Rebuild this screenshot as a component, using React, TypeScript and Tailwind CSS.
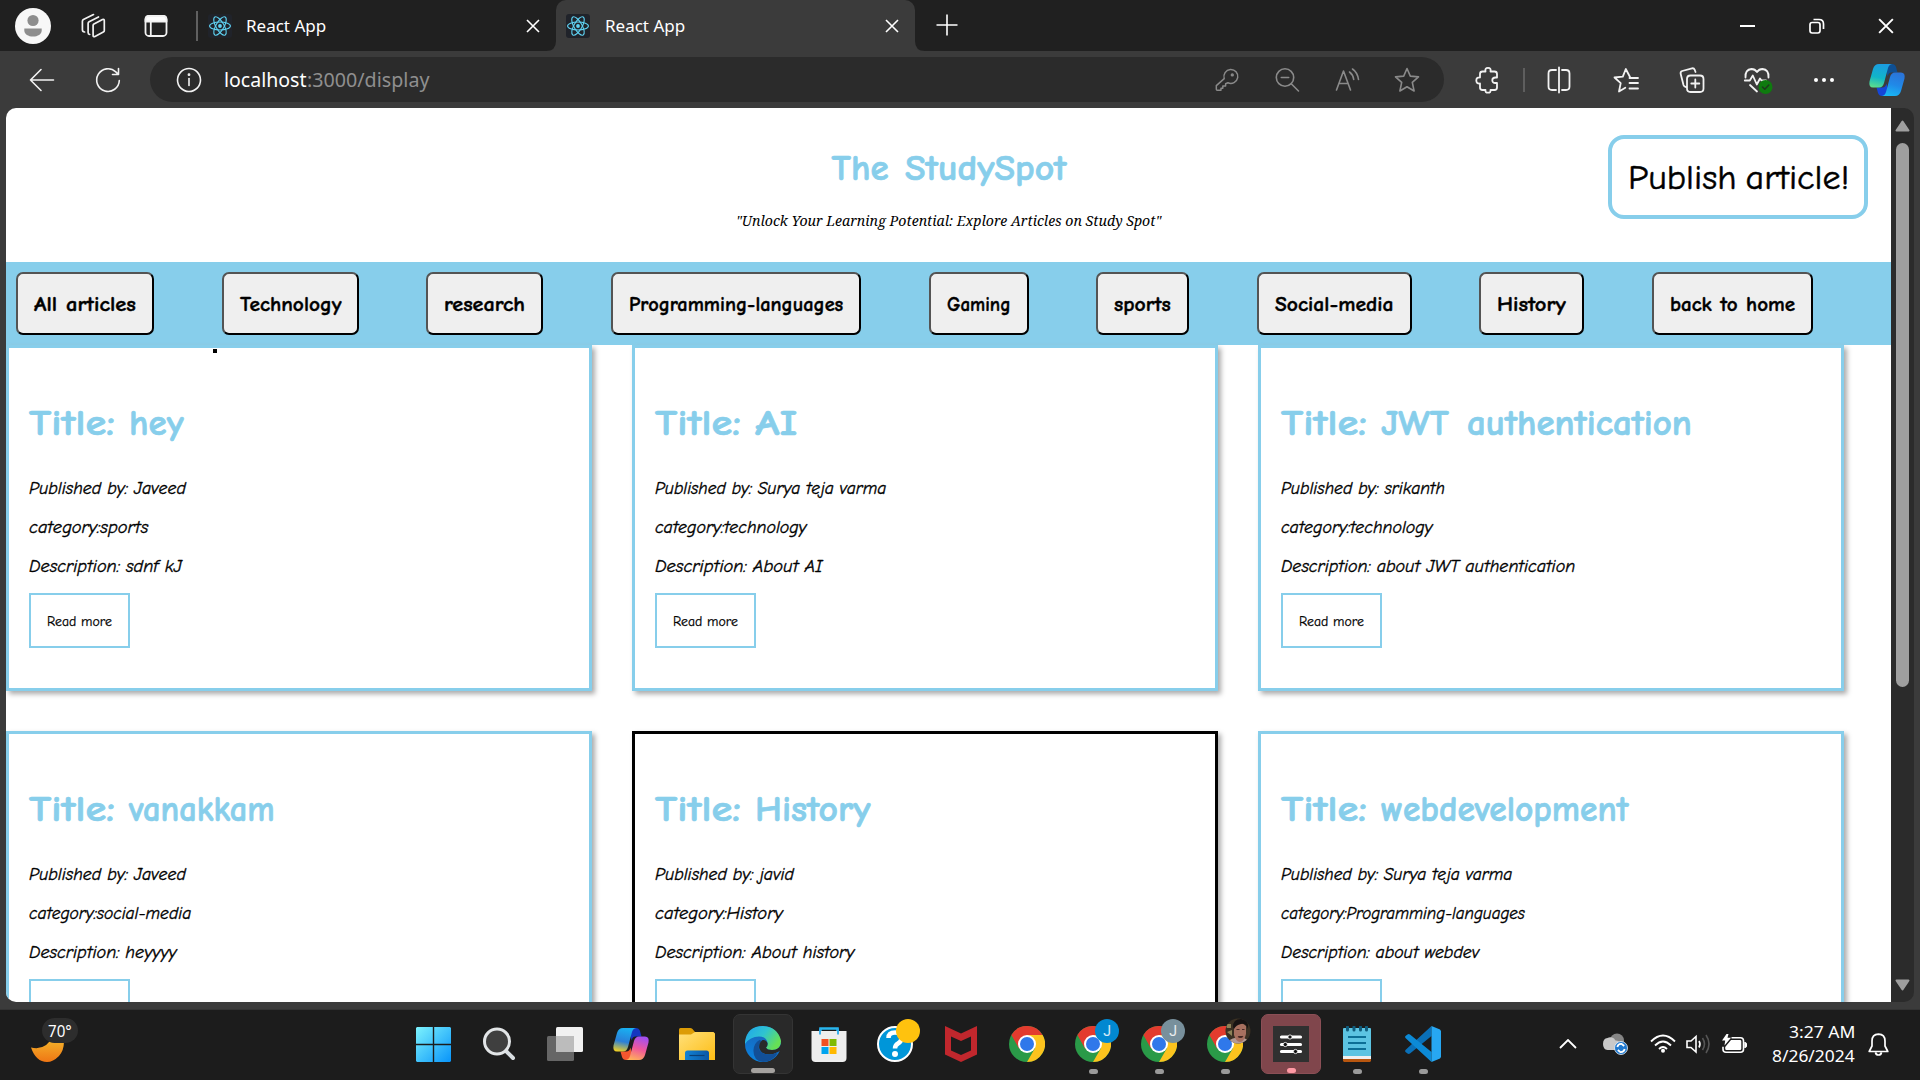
import React, { useLayoutEffect, useRef, useState } from "react";

/* Single line of text stretched horizontally to a given width. */
function Fit({ w, children, className = "" }: { w: number; children: string; className?: string }) {
  const ref = useRef<HTMLSpanElement>(null);
  const [scale, setScale] = useState(1);
  useLayoutEffect(() => {
    if (ref.current) setScale(w / ref.current.offsetWidth);
  }, [w]);
  return (
    <span className={"block shrink-0 text-left whitespace-nowrap " + className} style={{ width: w }}>
      <span ref={ref} className="inline-block origin-left" style={{ transform: `scaleX(${scale})` }}>
        {children}
      </span>
    </span>
  );
}

const comic = "font-['Comic_Sans_MS','Comic_Neue','Open_Sans',sans-serif]";

function Slot({ w, children }: { w: number; children?: React.ReactNode }) {
  return (
    <div className="flex h-full shrink-0 items-center justify-center" style={{ width: w }}>
      {children}
    </div>
  );
}

function Stroke({ size = 28, color = "#f2f2f2", sw = 1.6, children }: { size?: number; color?: string; sw?: number; children: React.ReactNode }) {
  return (
    <svg width={size} height={size} viewBox="0 0 28 28" fill="none" stroke={color} strokeWidth={sw} strokeLinecap="round" strokeLinejoin="round" className="shrink-0">
      {children}
    </svg>
  );
}

function ReactLogo() {
  return (
    <svg width="24" height="24" viewBox="0 0 24 24" fill="none" stroke="#5fd3f3" strokeWidth="1.1" className="shrink-0 rounded-[3px] bg-[#20232a]">
      <ellipse cx="12" cy="12" rx="10.4" ry="4" />
      <ellipse cx="12" cy="12" rx="10.4" ry="4" transform="rotate(60 12 12)" />
      <ellipse cx="12" cy="12" rx="10.4" ry="4" transform="rotate(120 12 12)" />
      <circle cx="12" cy="12" r="1.9" fill="#5fd3f3" stroke="none" />
    </svg>
  );
}

function Cross({ size = 14, sw = 1.6 }: { size?: number; sw?: number }) {
  return (
    <svg width={size} height={size} viewBox="0 0 14 14" stroke="#fff" strokeWidth={sw} className="shrink-0">
      <path d="M1 1L13 13M13 1L1 13" />
    </svg>
  );
}

function TabBar() {
  return (
    <div className="flex h-[51px] shrink-0 items-center bg-[#202020] font-['Noto_Sans',sans-serif] text-[17px] text-white">
      <div className="flex w-[556px] items-center pl-[15px]">
        <svg width="36" height="36" viewBox="0 0 36 36">
          <circle cx="18" cy="18" r="18" fill="#f7f7f7" />
          <circle cx="18" cy="12.5" r="5.6" fill="#8d8d8d" />
          <path d="M9.3 20.5h17.4v1.7c0 4-4 6.3-8.700 6.300s-8.700-2.300-8.700-6.300z" fill="#8d8d8d" />
        </svg>
        <div className="ml-[28px]">
          <Stroke sw={1.7}>
            <path d="M14.500 12.300L23.500 7.500q1.800-.6 1.800 1.200V18.500q0 1.100-1 1.600L16 24.500q-1.900.7-1.900-1.100V13.200z" />
            <path d="M10.700 22.500q-1.600-.2-1.600-2V11.500q0-1.200 1-1.800L19.500 5" />
            <path d="M5.600 20q-2.200 0-2.200-2.200V9.200q0-1.200 1-1.800L14.500 2.600" />
          </Stroke>
        </div>
        <div className="ml-[35px]">
          <Stroke sw={1.8}>
            <rect x="3.500" y="4" width="21" height="20" rx="3.500" />
            <path d="M3.500 7.500q0-3.500 3.500-3.500h14q3.500 0 3.500 3.500V9.500h-21z" fill="#fff" />
            <path d="M8.800 9v15" />
          </Stroke>
        </div>
        <div className="ml-[26px] h-[30px] w-[2px] bg-[#606060]" />
        <div className="ml-[10px]"><ReactLogo /></div>
        <Fit w={80} className="ml-[14px]">React App</Fit>
        <div className="ml-[200px]"><Cross /></div>
      </div>
      <div className="relative flex h-full w-[359px] items-center rounded-t-[10px] bg-[#3b3b3b] pl-[10px]">
        <svg width="10" height="10" viewBox="0 0 10 10" className="absolute bottom-0 -left-[10px]"><path d="M10 0V10H0Q10 10 10 0Z" fill="#3b3b3b" /></svg>
        <svg width="10" height="10" viewBox="0 0 10 10" className="absolute -right-[10px] bottom-0"><path d="M0 0V10H10Q0 10 0 0Z" fill="#3b3b3b" /></svg>
        <ReactLogo />
        <Fit w={80} className="ml-[15px]">React App</Fit>
        <div className="ml-[200px]"><Cross /></div>
      </div>
      <svg width="22" height="22" viewBox="0 0 22 22" stroke="#fff" strokeWidth="1.600" className="ml-[21px] -mt-[2px]"><path d="M11 .5v21M.5 11h21" /></svg>
      <div className="ml-auto flex h-full items-center">
        <Slot w={69}><div className="h-[2px] w-[15px] bg-white" /></Slot>
        <Slot w={69}>
          <svg width="16" height="16" viewBox="0 0 16 16" fill="none" stroke="#fff" strokeWidth="1.700">
            <rect x="1" y="4.500" width="10" height="10.500" rx="2.200" />
            <path d="M4.500 1.500h5.500q4.500 0 4.500 4.500v5" />
          </svg>
        </Slot>
        <Slot w={69}><Cross size={16} sw={1.7} /></Slot>
      </div>
    </div>
  );
}

function Copilot({ colors, size = 38 }: { colors: string[]; size?: number }) {
  const id = "cp" + colors[0].slice(1);
  return (
    <svg width={size} height={size} viewBox="0 0 38 38" className="shrink-0">
      <defs>
        <linearGradient id={id + "a"} x1="0.400" y1="0" x2="0.200" y2="1"><stop offset="0" stopColor={colors[0]} /><stop offset=".55" stopColor={colors[1]} /><stop offset="1" stopColor={colors[2]} /></linearGradient>
        <linearGradient id={id + "b"} x1="0.600" y1="0" x2="0.300" y2="1"><stop offset="0" stopColor={colors[3]} /><stop offset=".5" stopColor={colors[4]} /><stop offset="1" stopColor={colors[5]} /></linearGradient>
      </defs>
      <path d="M17 3h7q3 0 4 3l1.500 5.500h-6q-3 0-4 4z" fill={colors[6]} />
      <path d="M21 35h-7q-3 0-4-3l-1.500-5.500h6q3 0 4-4z" fill={colors[7]} />
      <path d="M11 3H24q-3 .5-4 4L16 22q-1.300 4.500-5 4.500H5q-4.500 0-3.500-6L5 8q1.500-5 6-5z" fill={`url(#${id}a)`} />
      <path d="M27 35H14q3-.5 4-4L22 16q1.300-4.500 5-4.500h6q4.500 0 3.500 6L33 30q-1.500 5-6 5z" fill={`url(#${id}b)`} />
    </svg>
  );
}

function Toolbar() {
  const g = "#8a8a8a";
  return (
    <div className="flex h-[57px] shrink-0 items-center bg-[#3b3b3b]">
      <div className="flex w-[150px] items-center pl-[28px]">
        <Stroke><path d="M25.500 14H2.500M13 3.500L2.500 14L13 24.500" /></Stroke>
        <div className="ml-[38px]">
          <Stroke><path d="M25.300 14.500A11.300 11.300 0 1 1 21.800 5.900L24.300 8.300M24.500 2.500v6h-6" /></Stroke>
        </div>
      </div>
      <div className="flex h-[45px] w-[1294px] shrink-0 items-center rounded-full bg-[#2b2b2b] pl-[25px] font-['Noto_Sans',sans-serif] text-[20px]">
        <Stroke><circle cx="14" cy="14" r="11.500" /><path d="M14 12.500v7" /><circle cx="14" cy="8.700" r=".6" fill="#fff" /></Stroke>
        <Fit w={83} className="ml-[21px] text-white">localhost</Fit>
        <Fit w={122} className="text-[#8f8f8f]">:3000/display</Fit>
        <div className="ml-auto flex items-center pr-[7px]">
          <Slot w={60}>
            <Stroke color={g} size={26}><path d="M3.500 25q-1 0-1-1v-4L11 12.500a7.500 7.500 0 1 1 4 4.500l-2.500 1v2.500h-3V23H7.500v2z" /><circle cx="19.700" cy="8.500" r="1" /></Stroke>
          </Slot>
          <Slot w={60}>
            <Stroke color={g}><circle cx="12" cy="11.500" r="8.700" /><path d="M8.300 11.500h7.400M18.500 18L25.500 25" /></Stroke>
          </Slot>
          <Slot w={60}>
            <Stroke color={g}><path d="M3.500 24L10.500 5L17.500 24M6 17.500h9M16.500 6q3.500 2.500 4.200 7.500M19.500 3q5 3.500 6 10.500" /></Stroke>
          </Slot>
          <Slot w={60}>
            <Stroke color={g}><path d="M14 2.500l3.300 7.600 8.200.8-6.200 5.500 1.800 8.600L14 20.700 6.900 25l1.800-8.600-6.200-5.500 8.200-.8z" /></Stroke>
          </Slot>
        </div>
      </div>
      <div className="flex h-full items-center pl-[14px]">
        <Slot w={60}>
          <Stroke sw={1.8}><path d="M8.500 5.500h3q-.8-3.700 2.500-3.700T16.500 5.500h4q2.500 0 2.500 2.500v3.500h-1.500q-3.200 0-3.200 2.800t3.200 2.700H23V21.500q0 2.500-2.500 2.500h-4q.5 2.700-2.500 2.700T11.500 24h-3Q6 24 6 21.500V17.500q-3.700.4-3.700-3T6 11.500V8q0-2.500 2.500-2.500z" /></Stroke>
        </Slot>
        <div className="ml-[5px] h-[24px] w-[2px] bg-[#5e5e5e]" />
        <Slot w={68}>
          <Stroke sw={1.8}><path d="M11 4H7Q3.500 4 3.500 7.500v13Q3.500 24 7 24h4M17 4h4q3.500 0 3.500 3.500v13q0 3.500-3.500 3.500h-4M14 1.500v25" /></Stroke>
        </Slot>
        <Slot w={66}>
          <Stroke sw={1.8}><path d="M18 11L13.800 3l-3 7.600-8.300.9 6.200 5.600L7 25.500l6.300-3.800M17.500 12H26M17.500 17H26M17.500 22.500H26" /></Stroke>
        </Slot>
        <Slot w={66}>
          <Stroke sw={1.8}><path d="M8 21q-2-.4-2.500-2L2.700 8q-.6-2.300 1.500-3L14 2.300q2-.4 2.700 1.500L17.500 6M15.500 9.500h-3Q9 9.500 9 13v9.500q0 3.500 3.500 3.500H22q3.500 0 3.500-3.500V13q0-3.500-3.500-3.500h-6.500M17.300 13.500v8M13.300 17.500h8" /></Stroke>
        </Slot>
        <Slot w={66}>
          <svg width="30" height="28" viewBox="0 0 30 28" fill="none" stroke="#f2f2f2" strokeWidth="1.800" strokeLinejoin="round" strokeLinecap="round">
            <path d="M2.500 11.500Q2 3.500 8.500 3q3.500 0 5.500 3 2-3 5.500-3 6.500.5 6 8.500M1.800 14.500h5l3-5 4 9 3.200-6 1.500 2H23M7 19l7 6.500" />
            <circle cx="22.500" cy="21" r="7" fill="#0f7b0f" stroke="none" />
            <path d="M19.500 21l2.300 2.300 4-4.300" stroke="#1d3a1d" strokeWidth="1.500" />
          </svg>
        </Slot>
        <Slot w={66}>
          <svg width="22" height="6" viewBox="0 0 22 6" fill="#fff"><circle cx="3" cy="3" r="2" /><circle cx="11" cy="3" r="2" /><circle cx="19" cy="3" r="2" /></svg>
        </Slot>
        <Slot w={60}>
          <Copilot colors={["#1b9de0", "#10b5c8", "#5ee08a", "#2b74d8", "#2089e8", "#19b9f5", "#0f4f92", "#1546d8"]} />
        </Slot>
      </div>
    </div>
  );
}

const NAV: [string, number][] = [
  ["All articles", 138], ["Technology", 137], ["research", 117], ["Programming-languages", 250], ["Gaming", 100],
  ["sports", 93], ["Social-media", 155], ["History", 105], ["back to home", 161],
];

type Article = { title: string; tw: number; by: string; bw: number; cat: string; cw: number; desc: string; dw: number; dark?: boolean };
const ARTICLES: Article[] = [
  { title: "hey", tw: 55, by: "Published by: Javeed", bw: 157, cat: "category:sports", cw: 119, desc: "Description: sdnf kJ", dw: 153 },
  { title: "AI", tw: 42, by: "Published by: Surya teja varma", bw: 231, cat: "category:technology", cw: 152, desc: "Description: About AI", dw: 168 },
  { title: "JWT authentication", tw: 311, by: "Published by: srikanth", bw: 164, cat: "category:technology", cw: 152, desc: "Description: about JWT authentication", dw: 294 },
  { title: "vanakkam", tw: 146, by: "Published by: Javeed", bw: 157, cat: "category:social-media", cw: 162, desc: "Description: heyyyy", dw: 148 },
  { title: "History", tw: 115, by: "Published by: javid", bw: 139, cat: "category:History", cw: 128, desc: "Description: About history", dw: 199, dark: true },
  { title: "webdevelopment", tw: 247, by: "Published by: Surya teja varma", bw: 231, cat: "category:Programming-languages", cw: 244, desc: "Description: about webdev", dw: 198 },
];

function Card({ a }: { a: Article }) {
  return (
    <article className={"h-[346px] border-[3px] pt-[50px] pl-[20px] shadow-[3px_3px_5px_#aaa] " + (a.dark ? "border-black" : "border-[#87ceeb]")}>
      <h2 className="flex h-[50px] gap-[14px] text-[37px] leading-[50px] font-bold text-[#87ceeb] [-webkit-text-stroke:0.7px] [word-spacing:5px]">
        <Fit w={86}>Title:</Fit>
        <Fit w={a.tw}>{a.title}</Fit>
      </h2>
      <div className="mt-[21px] text-[17.500px] leading-[39px] italic [-webkit-text-stroke:0.35px]">
        <Fit w={a.bw}>{a.by}</Fit>
        <Fit w={a.cw}>{a.cat}</Fit>
        <Fit w={a.dw}>{a.desc}</Fit>
      </div>
      <button className="mt-[7px] flex h-[55px] w-[101px] items-center justify-center border-2 border-[#87ceeb] pt-[2px] text-[14px] [-webkit-text-stroke:0.25px]">
        <Fit w={65}>Read more</Fit>
      </button>
    </article>
  );
}

function Page() {
  return (
    <main className={"h-[894px] w-[1885px] overflow-hidden rounded-tl-[10px] rounded-bl-[10px] bg-white text-black " + comic}>
      <header className="grid h-[154px] grid-cols-[1fr_425px_1fr]">
        <div />
        <div className="flex flex-col items-center pt-[35px]">
          <h1 className="flex h-[50px] gap-[16px] text-[37px] leading-[50px] font-bold text-[#87ceeb] [-webkit-text-stroke:0.7px]">
            <Fit w={57}>The</Fit>
            <Fit w={161}>StudySpot</Fit>
          </h1>
          <Fit w={425} className="mt-[17px] font-['Noto_Serif','Liberation_Serif',serif] text-[14.500px] leading-[20px] italic">"Unlock Your Learning Potential: Explore Articles on Study Spot"</Fit>
        </div>
        <div className="flex justify-end pt-[27px] pr-[23px]">
          <button className="flex h-[84px] w-[260px] items-center justify-center rounded-[16px] border-4 border-[#87ceeb] pt-[3px] text-[35px] [-webkit-text-stroke:0.5px] [word-spacing:-3px]">
            <Fit w={221}>Publish article!</Fit>
          </button>
        </div>
      </header>
      <nav className="flex h-[83px] gap-[67.650px] bg-[#87ceeb] pt-[10px] pl-[10px]">
        {NAV.map(([label, w]) => (
          <button key={label} className="flex h-[63px] shrink-0 items-center justify-center rounded-[7px] border-2 border-t-[#545454] border-r-black border-b-black border-l-[#545454] bg-[#efefef] pt-[3px] text-[20.500px] font-bold [-webkit-text-stroke:0.4px] [word-spacing:1px]" style={{ width: w }}>
            <Fit w={w - 36}>{label}</Fit>
          </button>
        ))}
      </nav>
      <section className="relative grid grid-cols-[586px_586px_586px] gap-[40px]">
        {ARTICLES.map((a) => <Card key={a.title} a={a} />)}
        <span className="absolute top-[4px] left-[207px] size-[4px] bg-black" />
      </section>
    </main>
  );
}

function Chrome({ badge, color }: { badge?: "J" | "photo"; color?: string }) {
  return (
    <div className="relative">
      <svg width="36" height="36" viewBox="0 0 36 36">
        <circle cx="18" cy="18" r="18" fill="#2a9a48" />
        <path d="M2.400 9A18 18 0 0 1 33.600 9L18 9.500L10 22.500z" fill="#e33b2e" />
        <path d="M33.600 9A18 18 0 0 1 18 36L25.800 22.500L18 9z" fill="#fcc31e" />
        <circle cx="18" cy="18" r="9" fill="#fff" />
        <circle cx="18" cy="18" r="7" fill="#2f78ea" />
      </svg>
      {badge === "J" && (
        <span className="absolute -top-[7px] left-[20px] flex size-[24px] items-center justify-center rounded-full font-['Roboto',sans-serif] text-[14px] text-white/85" style={{ background: color }}>J</span>
      )}
      {badge === "photo" && (
        <svg width="26" height="26" viewBox="0 0 26 26" className="absolute -top-[8px] left-[18px]">
          <defs><clipPath id="face"><circle cx="13" cy="13" r="12.500" /></clipPath></defs>
          <g clipPath="url(#face)">
            <rect width="26" height="26" fill="#3a3023" />
            <path d="M0 6h6v4H2zM2 14l5-2v6z" fill="#8d8258" />
            <path d="M3 26q2-6 7-6h9l7 4v2z" fill="#b39a96" />
            <path d="M9 8q6-6 12 0v8q-2 8-6 8t-6-7z" fill="#a8705f" />
            <path d="M8 9q0-8 8-8t7 10q-2-6-7-5t-7 5z" fill="#171313" />
            <path d="M11.500 11.500h3M17 11.500h2.500M13 18.500q2.500 2 5-.3" stroke="#4b2a26" strokeWidth="1.200" />
          </g>
        </svg>
      )}
    </div>
  );
}

function TaskIcon({ children, state }: { children: React.ReactNode; state?: "run" | "active" | "alert" }) {
  const bg = state === "active" ? "bg-[#292929] border border-[#343434]" : state === "alert" ? "bg-[#80464c] border border-[#8b4f56]" : "";
  return (
    <div className="flex w-[66px] shrink-0 justify-center">
      <div className={"relative flex size-[60px] items-center justify-center rounded-[7px] " + bg}>
        {children}
        {state && (
          <span className={"absolute bottom-0 h-[5px] rounded-full " + (state === "active" ? "w-[24px] bg-[#a5a29f]" : state === "alert" ? "w-[9px] bg-[#ff9aa5]" : "w-[9px] bg-[#9a9a9a]")} />
        )}
      </div>
    </div>
  );
}

function Taskbar() {
  return (
    <footer className="flex h-[71px] shrink-0 items-center border-t border-[#333] bg-[#1c1c1c] pb-[2px] font-['Noto_Sans',sans-serif] text-white">
      <div className="w-[400px] shrink-0 pl-[31px]">
        <div className="relative -top-[4px] h-[44px] w-[50px]">
          <svg width="34" height="26" viewBox="0 0 34 26" className="absolute bottom-0 left-0">
            <defs><linearGradient id="moon" x1="0" y1="0" x2="0" y2="1"><stop offset="0" stopColor="#f5bd2e" /><stop offset="1" stopColor="#ef7614" /></linearGradient></defs>
            <path d="M0 11.500Q15 15 22 0H32Q35 12 28 20Q22 26 16 26Q5 26 0 11.500Z" fill="url(#moon)" />
          </svg>
          <span className="absolute top-0 left-[11px] flex h-[25px] w-[36px] items-center justify-center rounded-full bg-[#2d2d2d] text-[17px]"><Fit w={24}>70°</Fit></span>
        </div>
      </div>
      <TaskIcon>
        <svg width="35" height="35" viewBox="0 0 35 35">
          <defs><linearGradient id="win" x1="0" y1="0" x2="1" y2="1"><stop offset="0" stopColor="#7df3fd" /><stop offset="1" stopColor="#0894fa" /></linearGradient></defs>
          <path d="M1 0H16.800V16.800H0V1zM18.200 0H34l1 1V16.800H18.200zM0 18.200H16.800V35H1l-1-1zM18.200 18.200H35V34l-1 1H18.200z" fill="url(#win)" />
        </svg>
      </TaskIcon>
      <TaskIcon>
        <svg width="34" height="34" viewBox="0 0 34 34"><path d="M24 24L31 31" stroke="#d8dde1" strokeWidth="4" strokeLinecap="round" /><circle cx="15" cy="14.500" r="12.500" fill="#3f3f3f" stroke="#e2e5e7" strokeWidth="3" /></svg>
      </TaskIcon>
      <TaskIcon>
        <svg width="36" height="34" viewBox="0 0 36 34">
          <rect x="0" y="9" width="27" height="25" rx="1.500" fill="#666" />
          <rect x="9" y="0" width="27" height="25" rx="1.500" fill="#f1f1f1" />
          <path d="M9 9H27V25H9z" fill="#bcbcbc" />
        </svg>
      </TaskIcon>
      <TaskIcon><Copilot colors={["#19aef0", "#2a7fd8", "#f5d21f", "#a34ff0", "#f0589a", "#ffb059", "#1436c0", "#f3562e"]} /></TaskIcon>
      <TaskIcon>
        <svg width="36" height="32" viewBox="0 0 36 32">
          <defs><linearGradient id="fold" x1="0" y1="0" x2="1" y2="1"><stop offset="0" stopColor="#ffe07a" /><stop offset="1" stopColor="#fdbd14" /></linearGradient><linearGradient id="tray" x1="0" x2="1"><stop offset="0" stopColor="#1283d6" /><stop offset="1" stopColor="#0a57a5" /></linearGradient></defs>
          <path d="M0 1.500Q0 0 1.500 0H11q1.500 0 2.500 1L16 4v6H0z" fill="#dc9c06" />
          <path d="M0 6.500H12L16 4H34.500L36 5.500V32H0z" fill="url(#fold)" />
          <path d="M6 32V25q0-2.500 2.500-2.500H27.500Q30 22.500 30 25V32z" fill="url(#tray)" /><path d="M10.500 27.500h15" stroke="#0a3f75" strokeWidth="1.200" />
        </svg>
      </TaskIcon>
      <TaskIcon state="active">
        <svg width="36" height="36" viewBox="0 0 36 36">
          <defs>
            <linearGradient id="e1" x1="0" y1="0" x2="1" y2=".5"><stop offset="0" stopColor="#1ea4ee" /><stop offset=".55" stopColor="#2fc3d0" /><stop offset="1" stopColor="#66e055" /></linearGradient>
            <linearGradient id="e2" x1=".5" y1="0" x2=".3" y2="1"><stop offset="0" stopColor="#1b5fb4" /><stop offset="1" stopColor="#0a84e0" /></linearGradient>
          </defs>
          <circle cx="18" cy="18" r="18" fill="url(#e2)" />
          <path d="M17 15q-4 3-3 8 2 7 10 7 5 0 8.500-2.500Q27 36 18 36 8 35 8.500 24q.5-7 6-10z" fill="#124f97" />
          <path d="M0 16Q2 0 18 0 33 1 36 15q0 9-9 9-5 0-6-2.500 2-1.500 1.500-5Q21 10.500 14 10.500 5 10.500 0 18z" fill="url(#e1)" />
          <path d="M17.500 14q-4 3-3.300 8.200Q16 28.500 24 28.500q4 0 9-2.500l3-2V18q-2 6-9 6-5 0-6-2.500 2-1.500 1.500-4.500-1.500-3.500-5-3z" fill="#292929" />
          <path d="M14.200 22.200Q16 28.500 24 28.500q4 0 8.500-2.300-3 6-9 8.300Q14 33 14.200 22.200z" fill="#124f97" />
        </svg>
      </TaskIcon>
      <TaskIcon>
        <svg width="36" height="36" viewBox="0 0 36 36">
          <path d="M9.500 7V2.500h17V7" fill="none" stroke="#28b6ee" strokeWidth="2.500" />
          <path d="M.5 5H35.500V32q0 4-4 4H4.500q-4 0-4-4z" fill="#eeeeee" />
          <path d="M9 2.500v6M27 2.500v6" stroke="#28a9ea" strokeWidth="1.800" />
          <path d="M10.500 13h7v7h-7z" fill="#f25022" /><path d="M18.500 13h7v7h-7z" fill="#7fba00" /><path d="M10.500 21h7v7h-7z" fill="#00a4ef" /><path d="M18.500 21h7v7h-7z" fill="#ffb900" />
        </svg>
      </TaskIcon>
      <TaskIcon>
        <div className="relative">
          <svg width="36" height="36" viewBox="0 0 36 36"><circle cx="18" cy="18" r="17" fill="#0096d9" stroke="#fff" strokeWidth="2" /><path d="M11.500 12q0-5.500 6.500-5.500t6.500 5.500q0 3.500-3.500 5.500-3 1.700-3 5" fill="none" stroke="#fff" strokeWidth="4.500" /><circle cx="18" cy="28" r="3" fill="#fff" /></svg>
          <span className="absolute -top-[7px] left-[19px] size-[24px] rounded-full bg-[#ffc20e]" />
        </div>
      </TaskIcon>
      <TaskIcon>
        <svg width="32" height="36" viewBox="0 0 32 36"><path d="M0 0L16 7.500L32 0V28.500L16 36L0 28.500z" fill="#c1272d" /><path d="M6 10.500L16 15L26 10.500V24.500L16 29L6 24.500z" fill="#1c1c1c" /></svg>
      </TaskIcon>
      <TaskIcon><Chrome /></TaskIcon>
      <TaskIcon state="run"><Chrome badge="J" color="#0288d1" /></TaskIcon>
      <TaskIcon state="run"><Chrome badge="J" color="#78909c" /></TaskIcon>
      <TaskIcon state="run"><Chrome badge="photo" /></TaskIcon>
      <TaskIcon state="alert">
        <svg width="36" height="36" viewBox="0 0 36 36"><rect width="36" height="36" fill="#303030" /><path d="M8.500 11h19M8.500 18.500h19M8.500 25.500h19" stroke="#fff" strokeWidth="3.200" strokeLinecap="round" /><g fill="#111" stroke="#fff" strokeWidth=".8"><circle cx="17" cy="11" r="2.100" /><circle cx="12.300" cy="18.500" r="2.100" /><circle cx="22.500" cy="25.500" r="2.100" /></g></svg>
      </TaskIcon>
      <TaskIcon state="run">
        <svg width="28" height="36" viewBox="0 0 28 36"><path d="M0 3q0-1 1-1h26q1 0 1 1V30H0z" fill="#5cc4e2" /><path d="M0 30h28v3H0z" fill="#efefef" /><path d="M0 33h28v2l-1 1H1l-1-1z" fill="#b8560f" /><path d="M5 11h18M5 17h18M5 23h18" stroke="#0c6f96" strokeWidth="1.800" /><path d="M4.500 1v3M11 1v3M17.500 1v3M23.500 1v3" stroke="#0f5c7c" strokeWidth="3" strokeLinecap="round" /></svg>
      </TaskIcon>
      <TaskIcon state="run">
        <svg width="36" height="36" viewBox="0 0 36 36"><path d="M1 23.500L26.500 0V10L5 27.500q-1.500.8-2.500 0L.5 26q-1-1 .5-2.500z" fill="#0a70b8" /><path d="M1 12.500L26.500 36V26L5 8.500q-1.500-.8-2.500 0L.5 10q-1 1 .5 2.500z" fill="#0c8ad6" /><path d="M26.500 0L35 3.500l1 1.500V31l-1 1.500L26.500 36z" fill="#27a7f2" /></svg>
      </TaskIcon>
      <div className="ml-auto flex h-full items-center pr-[31px]">
        <svg width="18" height="10" viewBox="0 0 18 10" fill="none" stroke="#fff" strokeWidth="1.800"><path d="M1 9L9 1l8 8" /></svg>
        <svg width="25" height="22" viewBox="0 0 25 22" className="ml-[26px]">
          <circle cx="14" cy="7.500" r="7" fill="#858585" /><path d="M4.500 5a6 6 0 0 1 8 2.500q4 0 5 4V17H4.500Q0 16.500 0 11T4.500 5z" fill="#c9c9c9" />
          <circle cx="18" cy="15" r="6.500" fill="#1e78cf" stroke="#e8f2fb" strokeWidth=".8" /><path d="M14.300 14q1-3.500 4.500-3l2.400 2M21.700 16q-1 3.500-4.500 3l-2.400-2" fill="none" stroke="#fff" strokeWidth="1.800" />
        </svg>
        <svg width="26" height="20" viewBox="0 0 26 20" fill="none" stroke="#fff" strokeWidth="1.800" className="ml-[22px]"><path d="M1 7.500q12-12 24 0M5 11.500q8-8 16 0M9 15q4-4 8 0" /><circle cx="13" cy="16.800" r="2" fill="#fff" stroke="none" /></svg>
        <svg width="25" height="22" viewBox="0 0 25 22" fill="none" stroke="#fff" strokeWidth="1.600" className="ml-[10px]"><path d="M1 8v6.500h4l5 4.500V3.500L5 8z" /><path d="M13 8q2 3 0 6.500" /><path d="M16.500 5q4 6 0 12M20 2q6 9 0 18" stroke="#555" /></svg>
        <svg width="25" height="20" viewBox="0 0 25 20" className="ml-[11px]"><path d="M9.500 3.800H18.500q3 0 3 3v8.500q0 3-3 3H4q-3 0-3-3v-2.500" fill="none" stroke="#fff" strokeWidth="1.600" /><path d="M9 6h9q1.300 0 1.300 1.300v7.400q0 1.300-1.300 1.300H4.500q-1.300 0-1.300-1.300V13zM22.300 8H23.500L25 9.500v3L23.500 14h-1.200zM4.500 0H6.500L5.500 3.800H9L2.500 11.500l.7-5H0z" fill="#fff" /></svg>
        <div className="-mt-px ml-[25px] flex flex-col items-end text-[17px] leading-[24px]">
          <Fit w={66}>3:27 AM</Fit>
          <Fit w={83}>8/26/2024</Fit>
        </div>
        <svg width="21" height="23" viewBox="0 0 21 23" fill="none" stroke="#fff" strokeWidth="1.700" className="ml-[13px]" strokeLinejoin="round"><path d="M10.500 1.200Q4 1.500 4 8v5L1.200 18.500H19.800L17 13V8Q17 1.500 10.500 1.200zM7.500 19.500q.5 2.500 3 2.500t3-2.500" /></svg>
      </div>
    </footer>
  );
}

export default function App() {
  return (
    <div className="flex h-[1080px] w-[1920px] flex-col overflow-hidden bg-[#3b3b3b]">
      <TabBar />
      <Toolbar />
      <div className="flex h-[901px] shrink-0 pl-[6px]">
        <Page />
        <div className="flex h-[894px] w-[23px] flex-col items-center rounded-tr-[10px] rounded-br-[10px] bg-[#2b2b2b] pt-[12px] pb-[11px]">
          <svg width="15" height="12" viewBox="0 0 15 12" fill="#9f9f9f" stroke="#9f9f9f" strokeWidth="2" strokeLinejoin="round"><path d="M7.500 1.500L13.500 10.500H1.500z" /></svg>
          <div className="mt-[11px] h-[544px] w-[13px] rounded-full bg-[#9f9f9f]" />
          <svg width="15" height="12" viewBox="0 0 15 12" fill="#9f9f9f" stroke="#9f9f9f" strokeWidth="2" strokeLinejoin="round" className="mt-auto"><path d="M7.500 10.500L13.500 1.500H1.500z" /></svg>
        </div>
      </div>
      <Taskbar />
    </div>
  );
}
